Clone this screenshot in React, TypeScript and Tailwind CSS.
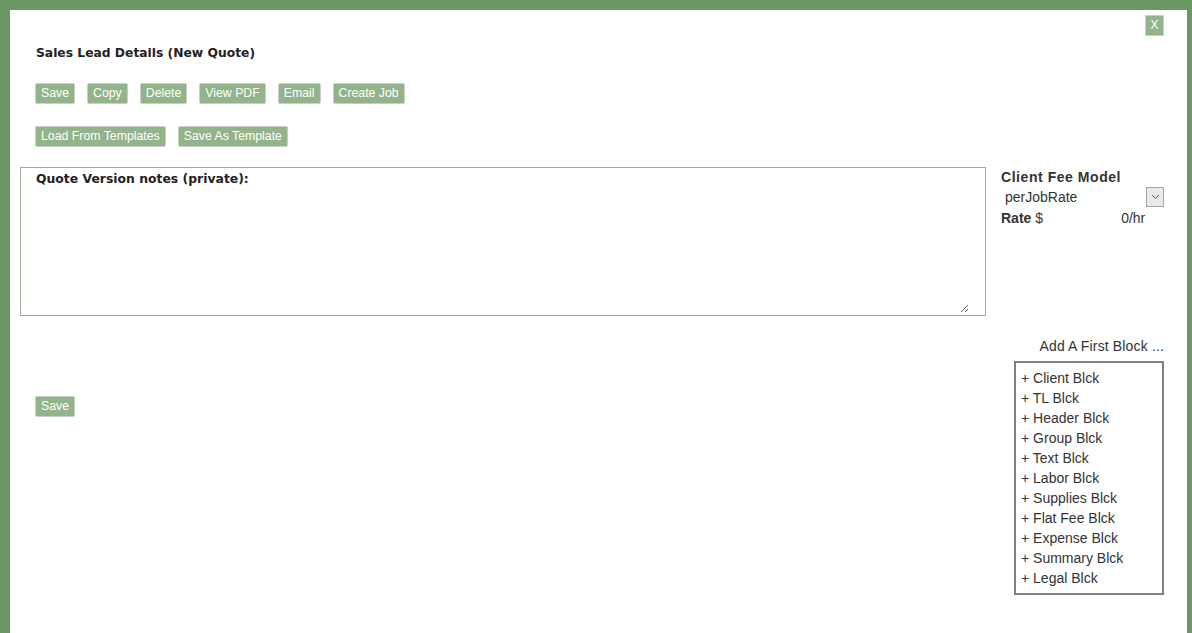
import React from 'react';

const btn =
  "bg-[#93b38b] text-white border border-[#c9cfc6] rounded-[2px] px-[5px] h-[21px] text-[12.3px] leading-[15px] font-['Liberation_Sans',Arial,sans-serif]";

const Btn = ({ children }: { children: React.ReactNode }) => (
  <button className={btn}>{children}</button>
);

const blocks = [
  'Client Blck',
  'TL Blck',
  'Header Blck',
  'Group Blck',
  'Text Blck',
  'Labor Blck',
  'Supplies Blck',
  'Flat Fee Blck',
  'Expense Blck',
  'Summary Blck',
  'Legal Blck',
];

const App: React.FC = () => {
  return (
    <div className="min-h-[633px] bg-[#6a9862] pt-[10px] pl-[10px] pr-[5px]">
      <div className="bg-white min-h-[623px] text-[#333] font-['Liberation_Sans',Arial,sans-serif]">
        {/* close */}
        <div className="flex justify-end pt-[5px] pr-[23px]">
          <button className="bg-[#93b38b] text-white border border-[#c9cfc6] w-[19px] h-[21px] text-[12px] leading-[15px]">
            X
          </button>
        </div>

        {/* header + toolbar */}
        <div className="pl-[25px]">
          <h1 className="mt-[9px] pl-[1px] text-[12.3px] leading-[16px] font-bold font-['DejaVu_Sans',Verdana,sans-serif] text-[#222]">
            Sales Lead Details (New Quote)
          </h1>
          <div className="flex gap-[12px] mt-[22px]">
            <Btn>Save</Btn>
            <Btn>Copy</Btn>
            <Btn>Delete</Btn>
            <Btn>View PDF</Btn>
            <Btn>Email</Btn>
            <Btn>Create Job</Btn>
          </div>
          <div className="flex gap-[12px] mt-[22px]">
            <Btn>Load From Templates</Btn>
            <Btn>Save As Template</Btn>
          </div>
        </div>

        {/* notes + fee model */}
        <div className="flex mt-[20px] pl-[10px] pr-[23px]">
          <div className="w-[966px] h-[149px] border border-[#9cb294] flex flex-col">
            <div className="pl-[15px] pt-[3px] text-[12.4px] leading-[16px] font-bold font-['DejaVu_Sans',Verdana,sans-serif] text-[#222]">
              Quote Version notes (private):
            </div>
            <textarea className="flex-1 ml-[4px] mr-[16px] mb-[2px] outline-none resize" />
          </div>
          <div className="flex-1 ml-[15px] text-[14px]">
            <div className="font-bold tracking-[0.55px] leading-[18px] mt-[1px]">Client Fee Model</div>
            <div className="flex items-center justify-between mt-[1px] h-[20px]">
              <span className="pl-[4px] leading-[18px]">perJobRate</span>
              <span className="w-[18px] h-[20px] border border-[#a6a6a6] bg-[#e9e9e9] flex items-center justify-center">
                <svg width="9" height="6" viewBox="0 0 9 6">
                  <path d="M1 1 L4.5 4.5 L8 1" fill="none" stroke="#555" strokeWidth="1" />
                </svg>
              </span>
            </div>
            <div className="flex leading-[18px] mt-[2px]">
              <span className="font-bold">Rate</span>
              <span className="ml-[4px]">$</span>
              <span className="ml-[78px]">0/hr</span>
            </div>
          </div>
        </div>

        {/* save + blocks */}
        <div className="flex pl-[25px] pr-[23px]">
          <div className="flex-1 pt-[77px]">
            <Btn>Save</Btn>
          </div>
          <div className="flex flex-col items-end text-[14px]">
            <div className="mt-[22px] leading-[16px] tracking-[0.15px]">Add A First Block ...</div>
            <ul className="mt-[7px] w-[150px] border-2 border-[#808080] py-[5px] px-[5px]">
              {blocks.map((b) => (
                <li key={b} className="leading-[20px]">
                  + {b}
                </li>
              ))}
            </ul>
          </div>
        </div>
      </div>
    </div>
  );
};

export default App;
